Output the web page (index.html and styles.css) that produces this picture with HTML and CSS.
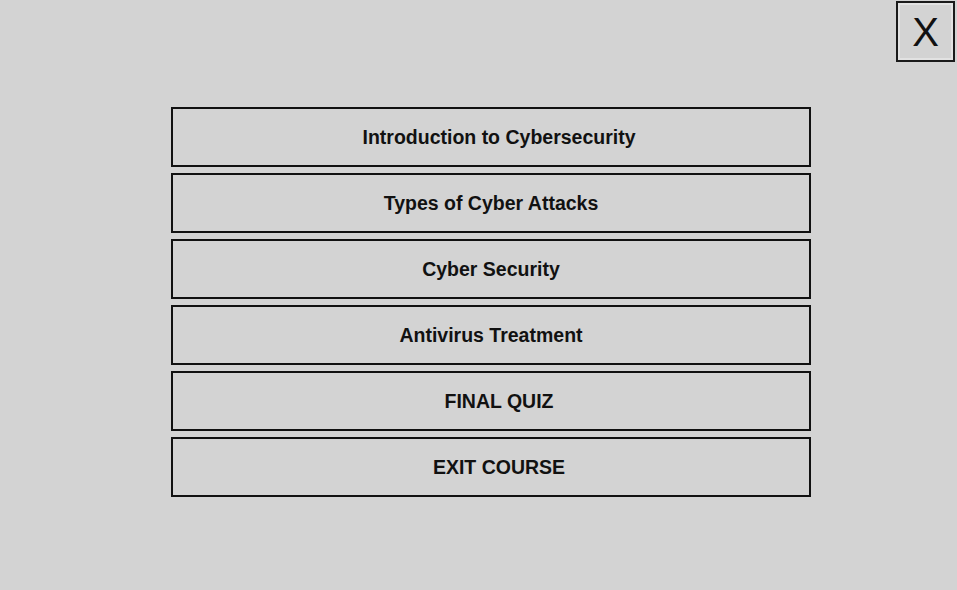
FILE: index.html
```html
<!DOCTYPE html>
<html>
<head>
<meta charset="utf-8">
<link rel="stylesheet" href="styles.css">
</head>
<body>
<div class="page">
  <div class="topbar">
    <button class="close">X</button>
  </div>
  <nav class="menu">
    <button class="item shift">Introduction to Cybersecurity</button>
    <button class="item">Types of Cyber Attacks</button>
    <button class="item">Cyber Security</button>
    <button class="item">Antivirus Treatment</button>
    <button class="item shift">FINAL QUIZ</button>
    <button class="item shift">EXIT COURSE</button>
  </nav>
</div>
</body>
</html>
```
FILE: styles.css
```css
html, body {
  margin: 0;
  padding: 0;
  background: #d3d3d3;
}
.page {
  width: 957px;
  height: 590px;
  font-family: "Liberation Sans", Arial, sans-serif;
}
.topbar {
  display: flex;
  justify-content: flex-end;
  padding: 1px 2px 0 0;
}
.close {
  width: 59px;
  height: 61px;
  margin: 0;
  padding: 0;
  background: #d3d3d3;
  border: 2px solid #1a1a1a;
  box-shadow: inset 0 0 0 2px #e2e2e2;
  font-family: "Liberation Sans", Arial, sans-serif;
  font-size: 40px;
  font-weight: normal;
  color: #111;
  line-height: 1;
}
.menu {
  display: flex;
  flex-direction: column;
  gap: 6px;
  width: 640px;
  margin: 45px 0 0 171px;
}
.item {
  height: 60px;
  margin: 0;
  padding: 0;
  background: #d3d3d3;
  border: 2px solid #111;
  font-family: "Liberation Sans", Arial, sans-serif;
  font-size: 19.5px;
  font-weight: bold;
  color: #111;
  text-align: center;
}
.item.shift {
  padding-left: 16px;
}
```
